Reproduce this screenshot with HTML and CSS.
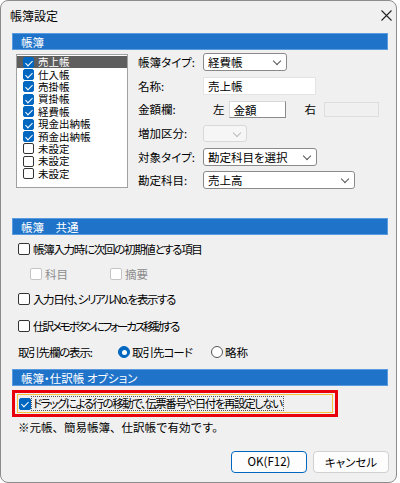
FILE: index.html
```html
<!DOCTYPE html>
<html>
<head>
<meta charset="UTF-8">
<link rel="stylesheet" href="styles.css">
</head>
<body>
<div class="win">
	<div class="titlebar">
		<span class="title">帳簿設定</span>
		<svg class="close" width="11" height="11" viewBox="0 0 11 11"><path d="M0.5 0.5L10.5 10.5M10.5 0.5L0.5 10.5" stroke="#222" stroke-width="1.1" fill="none"/></svg>
	</div>

	<div class="head first">帳簿</div>
	<div class="sec1">
		<div class="list">
			<div class="item selected"><span class="cb on"></span>売上帳</div>
			<div class="item"><span class="cb on"></span>仕入帳</div>
			<div class="item"><span class="cb on"></span>売掛帳</div>
			<div class="item"><span class="cb on"></span>買掛帳</div>
			<div class="item"><span class="cb on"></span>経費帳</div>
			<div class="item"><span class="cb on"></span>現金出納帳</div>
			<div class="item"><span class="cb on"></span>預金出納帳</div>
			<div class="item"><span class="cb"></span>未設定</div>
			<div class="item"><span class="cb"></span>未設定</div>
			<div class="item"><span class="cb"></span>未設定</div>
		</div>
		<div class="form">
			<div class="frow"><span class="lbl">帳簿タイプ:</span><div class="combo w84">経費帳<span class="arrow"></span></div></div>
			<div class="frow"><span class="lbl">名称:</span><div class="edit w113">売上帳</div></div>
			<div class="frow"><span class="lbl">金額欄:</span><span class="side">左</span><div class="edit sunk w57">金額</div><span class="side right">右</span><div class="edit off w55"></div></div>
			<div class="frow"><span class="lbl">増加区分:</span><div class="combo off w44"><span class="arrow"></span></div></div>
			<div class="frow"><span class="lbl">対象タイプ:</span><div class="combo w114">勘定科目を選択<span class="arrow"></span></div></div>
			<div class="frow"><span class="lbl">勘定科目:</span><div class="combo w152">売上高<span class="arrow"></span></div></div>
		</div>
	</div>

	<div class="head">帳簿　共通</div>
	<div class="sec2">
		<div class="row r1"><span class="cb"></span><span class="sq13">帳簿入力時に次回の初期値とする項目</span></div>
		<div class="row r2 sub">
			<span class="opt grey"><span class="cb off"></span>科目</span>
			<span class="opt grey"><span class="cb off"></span>摘要</span>
		</div>
		<div class="row r3"><span class="cb"></span><span class="sq14">入力日付、シリアルNo.を表示する</span></div>
		<div class="row r4"><span class="cb"></span><span class="sq21">仕訳メモボタンにフォーカス移動する</span></div>
		<div class="row r5">
			<span class="plain"><span class="sq12">取引先欄の表示:</span></span>
			<span class="opt"><span class="radio on"></span><span class="sq10">取引先コード</span></span>
			<span class="opt"><span class="radio"></span>略称</span>
		</div>
	</div>

	<div class="head">帳簿・仕訳帳 オプション</div>
	<div class="mark">
		<div class="focus"><span class="cb on"></span><span class="dots">ドラッグによる行の移動で、伝票番号や日付を再設定しない</span></div>
	</div>
	<div class="note">※元帳、簡易帳簿、仕訳帳で有効です。</div>

	<div class="buttons">
		<div class="btn default">OK(F12)</div>
		<div class="btn">キャンセル</div>
	</div>
</div>
</body>
</html>
```

FILE: styles.css
```css
* {
	box-sizing: border-box;
}
body {
	margin: 0;
	background: #fff;
	font-family: "Noto Sans CJK JP", sans-serif;
	font-size: 11.5px;
	font-feature-settings: "palt";
	color: #000;
}
.win {
	width: 397px;
	height: 483px;
	border: 1px solid #8c8c8c;
	border-radius: 8px;
	background: #f0f0f0;
	padding-left: 11px;
	overflow: hidden;
}
.titlebar {
	height: 27px;
	display: flex;
	align-items: center;
	justify-content: space-between;
	padding-right: 4px;
}
.title {
	font-size: 12px;
	margin-left: -2px;
	margin-top: 1px;
}
.close {
	margin-top: 1px;
}
.head {
	width: 376px;
	height: 17px;
	line-height: 16px;
	background: #1f74c9;
	border: 1px solid #5a9be0;
	color: #fff;
	padding-left: 8px;
}
.head.first {
	margin-top: 5px;
}

.sq10 { letter-spacing: -1px; }
.sq12 { letter-spacing: -1.2px; }
.sq13 { letter-spacing: -1.3px; }
.sq14 { letter-spacing: -1.4px; }
.sq21 { letter-spacing: -2.1px; }

/* 帳簿 */
.sec1 {
	display: flex;
	height: 168px;
}
.list {
	width: 112px;
	height: 134px;
	margin: 4px 0 0 4px;
	background: #fff;
	border: 1px solid #a0a0a0;
	padding-top: 1px;
	font-size: 10.5px;
}
.item {
	height: 12.4px;
	line-height: 12px;
	display: flex;
	align-items: center;
	padding-left: 6px;
	white-space: nowrap;
}
.item.selected {
	background: #5e5e5e;
	color: #fff;
}
.item .cb {
	width: 11px;
	height: 11px;
	margin-right: 4px;
}
.form {
	margin: 0.5px 0 0 10px;
}
.frow {
	height: 23.6px;
	display: flex;
	align-items: center;
}
.lbl {
	width: 65px;
}
.side {
	margin: 0 4px 0 10px;
}
.side.right {
	margin: 0 8px 0 19px;
}
.combo, .edit {
	height: 18px;
	line-height: 16px;
	background: #fff;
	padding-left: 4px;
	position: relative;
	white-space: nowrap;
}
.combo {
	border: 1px solid #8a8a8a;
	border-radius: 3px;
}
.combo.off {
	height: 17px;
	background: #f6f6f6;
	border-color: #d8d8d8;
}
.arrow {
	position: absolute;
	right: 6px;
	top: 4px;
	width: 6px;
	height: 6px;
	border-right: 1px solid #555;
	border-bottom: 1px solid #555;
	transform: rotate(45deg);
}
.combo.off .arrow {
	border-color: #bbb;
}
.edit {
	border: 1px solid #e4e4e4;
}
.edit.sunk {
	height: 17px;
	border-color: #d8d8d8 #8a8a8a #8a8a8a #d8d8d8;
}
.edit.off {
	height: 15px;
	background: #f0f0f0;
	border-color: #dedede;
}
.w44 { width: 44px; }
.w55 { width: 55px; }
.w57 { width: 57px; }
.w84 { width: 84px; }
.w113 { width: 113px; }
.w114 { width: 114px; }
.w152 { width: 152px; }

/* checkboxes */
.cb {
	display: inline-block;
	flex: none;
	width: 12px;
	height: 12px;
	border: 1px solid #333;
	border-radius: 2px;
	background: #fff;
	margin-right: 3px;
	position: relative;
}
.cb.off {
	border-color: #c4c4c4;
}
.cb.on {
	background: #0067c0;
	border-color: #0067c0;
}
.cb.on::after {
	content: "";
	position: absolute;
	left: 3px;
	top: 1px;
	width: 3px;
	height: 6px;
	border-right: 1.2px solid #fff;
	border-bottom: 1.2px solid #fff;
	transform: rotate(45deg);
}
.radio {
	display: inline-block;
	flex: none;
	width: 12px;
	height: 12px;
	border-radius: 50%;
	border: 1px solid #555;
	background: #fff;
	margin-right: 2px;
	position: relative;
}
.radio.on {
	background: #0067c0;
	border-color: #0067c0;
}
.radio.on::after {
	content: "";
	position: absolute;
	left: 2.5px;
	top: 2.5px;
	width: 5px;
	height: 5px;
	border-radius: 50%;
	background: #fff;
}

/* 共通 */
.sec2 {
	padding-left: 6px;
	height: 134px;
}
.row {
	display: flex;
	align-items: center;
	white-space: nowrap;
}
.r1 { height: 27px; }
.r2 { height: 24px; }
.r3 { height: 26px; }
.r4 { height: 28px; }
.r5 { height: 24px; }
.sub {
	padding-left: 12px;
}
.opt {
	display: flex;
	align-items: center;
}
.sub .opt {
	width: 80px;
}
.grey {
	color: #8c8c8c;
}
.plain {
	width: 100px;
}
.r5 .opt {
	width: 93px;
}

/* オプション */
.mark {
	width: 326px;
	height: 27px;
	margin-top: 4px;
	border: 3px solid #e8000b;
	padding: 1px 2px;
}
.focus {
	height: 19px;
	border: 1px solid #f7c33c;
	display: flex;
	align-items: center;
	padding-left: 1px;
	white-space: nowrap;
}
.focus .cb {
	margin-right: 1px;
}
.dots {
	outline: 1px dotted #555;
	line-height: 13px;
	padding: 0 1px;
	letter-spacing: -1.45px;
}
.note {
	margin: 3px 0 0 6px;
	height: 14px;
	line-height: 14px;
	font-feature-settings: normal;
}
.buttons {
	display: flex;
	gap: 6px;
	margin: 17px 0 0 219px;
}
.btn {
	width: 76px;
	height: 22px;
	line-height: 20px;
	text-align: center;
	background: #fdfdfd;
	border: 1px solid #d0d0d0;
	border-radius: 4px;
}
.btn.default {
	border: 1.5px solid #0067c0;
	line-height: 19px;
}
```
